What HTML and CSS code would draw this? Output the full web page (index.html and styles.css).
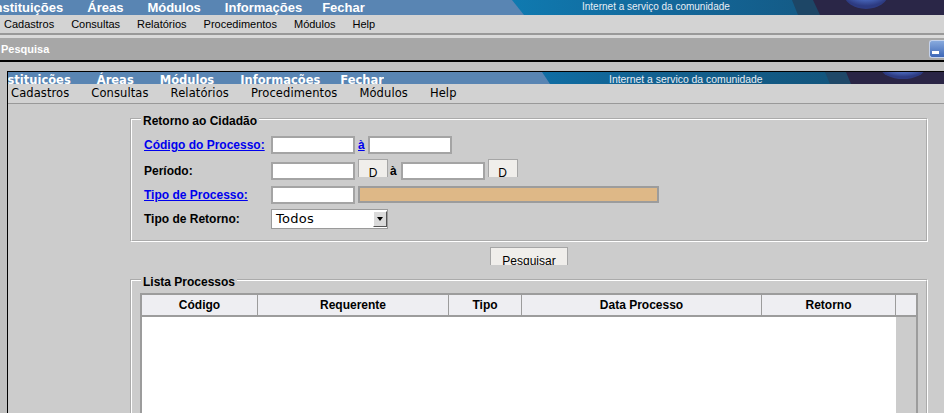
FILE: index.html
```html
<!DOCTYPE html>
<html lang="pt">
<head>
<meta charset="utf-8">
<title>Pesquisa</title>
<link rel="stylesheet" href="styles.css">
</head>
<body>
<header class="topbar">
  <nav class="topnav">
    <span class="first">Instituições</span><span>Áreas</span><span>Módulos</span><span>Informações</span><span class="last">Fechar</span>
  </nav>
  <svg class="banner" width="434" height="15" viewBox="0 0 434 15">
    <defs>
      <linearGradient id="bt" x1="0" x2="1" y1="0" y2="0">
        <stop offset="0" stop-color="#0f7ab0"/>
        <stop offset="0.35" stop-color="#13689b"/>
        <stop offset="0.7" stop-color="#145a85"/>
        <stop offset="1" stop-color="#14557d"/>
      </linearGradient>
      <radialGradient id="blob" cx="0.5" cy="0.3" r="0.6">
        <stop offset="0" stop-color="#b4c8f2"/>
        <stop offset="0.55" stop-color="#4d6fc6"/>
        <stop offset="1" stop-color="#2d3b82"/>
      </radialGradient>
    </defs>
    <rect width="434" height="15" fill="url(#bt)"/>
    <polygon points="0,0 2,0 14,15 0,15" fill="#5985b3"/>
    <polygon points="282,0 434,0 434,15 288,15" fill="#1d4666"/>
    <polygon points="303,0 434,0 434,15 310,15" fill="#2a2647"/>
    <ellipse cx="356" cy="-6" rx="22" ry="15" fill="url(#blob)"/>
    <text x="72" y="9.5" font-family="Liberation Sans, Arial, sans-serif" font-size="10" fill="#e8eef5">Internet a serviço da comunidade</text>
  </svg>
</header>
<div class="menubar">
  <span>Cadastros</span><span>Consultas</span><span>Relatórios</span><span>Procedimentos</span><span>Módulos</span><span>Help</span>
</div>
<div class="titlebar">
  <span class="title">Pesquisa</span>
  <span class="minbtn"><span class="dash"></span></span>
</div>
<div class="frame-area">
  <div class="frame">
    <div class="ibar">
      <nav class="inav">
        <span>Instituições</span><span>Áreas</span><span>Módulos</span><span>Informações</span><span class="last">Fechar</span>
      </nav>
      <svg class="ibanner" width="414" height="12" viewBox="0 0 414 12">
        <defs>
          <linearGradient id="ibt" x1="0" x2="1" y1="0" y2="0">
            <stop offset="0" stop-color="#0f6fa6"/>
            <stop offset="0.3" stop-color="#12608f"/>
            <stop offset="1" stop-color="#134f72"/>
          </linearGradient>
          <radialGradient id="iblob" cx="0.5" cy="0.3" r="0.6">
            <stop offset="0" stop-color="#b4c8f2"/>
            <stop offset="0.55" stop-color="#5273c8"/>
            <stop offset="1" stop-color="#2d3b82"/>
          </radialGradient>
        </defs>
        <rect width="414" height="12" fill="url(#ibt)"/>
        <polygon points="0,0 12,0 20,12 0,12" fill="#5985b3"/>
        <polygon points="295,0 414,0 414,12 300,12" fill="#1f4868"/>
        <polygon points="316,0 414,0 414,12 321,12" fill="#2a2545"/>
        <ellipse cx="373" cy="-4" rx="22" ry="11" fill="url(#iblob)"/>
        <text x="79" y="11" font-family="Liberation Sans, Arial, sans-serif" font-size="10.4" fill="#e8eef5">Internet a servico da comunidade</text>
      </svg>
    </div>
    <div class="imenu">
      <span>Cadastros</span><span>Consultas</span><span>Relatórios</span><span>Procedimentos</span><span>Módulos</span><span>Help</span>
    </div>
    <main class="content">
      <fieldset class="box box-form">
        <legend class="legend legend-form">Retorno ao Cidadão</legend>
        <div class="rows">
          <div class="row">
            <a class="label link" href="#">Código do Processo:</a>
            <input class="field" type="text">
            <a class="to to-first link" href="#">à</a>
            <input class="field" type="text">
          </div>
          <div class="row row-tall">
            <span class="label">Período:</span>
            <input class="field" type="text">
            <button class="btn btn-date" type="button">D</button>
            <span class="to to-date">à</span>
            <input class="field" type="text">
            <button class="btn btn-date" type="button">D</button>
          </div>
          <div class="row">
            <a class="label link" href="#">Tipo de Processo:</a>
            <input class="field" type="text">
            <span class="lookup"></span>
          </div>
          <div class="row row-select">
            <span class="label">Tipo de Retorno:</span>
            <div class="select">
              <span class="select-value">Todos</span>
              <span class="select-arrow"></span>
            </div>
          </div>
        </div>
      </fieldset>
      <div class="actions">
        <button class="btn btn-search" type="button">Pesquisar</button>
      </div>
      <fieldset class="box box-list">
        <legend class="legend legend-list">Lista Processos</legend>
        <div class="grid">
          <div class="ghead">
            <div class="gcell">Código</div>
            <div class="gcell">Requerente</div>
            <div class="gcell">Tipo</div>
            <div class="gcell">Data Processo</div>
            <div class="gcell">Retorno</div>
            <div class="gcell"></div>
          </div>
          <div class="gbody">
            <div class="gwhite"></div>
            <div class="gtrack"></div>
          </div>
        </div>
      </fieldset>
    </main>
  </div>
</div>
</body>
</html>
```

FILE: styles.css
```css
html, body {
  margin: 0;
  padding: 0;
  overflow: hidden;
}

body {
  width: 944px;
  height: 413px;
  background: #c0c0c0;
  font-family: "Liberation Sans", Arial, sans-serif;
  color: #000;
}

/* ---------- outer page ---------- */
.topbar {
  display: flex;
  height: 15px;
  background: #5985b3;
  overflow: hidden;
}

.topnav {
  display: flex;
  gap: 24px;
  font-weight: bold;
  font-size: 13px;
  line-height: 15px;
  color: #fff;
  white-space: nowrap;
}

.topnav .first {
  margin-left: -9px;
}

.topnav .last {
  margin-left: -4px;
}

.banner {
  display: block;
  flex: none;
  margin-left: auto;
}

.menubar {
  display: flex;
  gap: 17px;
  height: 18px;
  padding-left: 4px;
  background: #d3d3d3;
  border-bottom: 2px solid #999;
  font-size: 11px;
  line-height: 18px;
  white-space: nowrap;
}

.titlebar {
  display: flex;
  align-items: center;
  justify-content: space-between;
  height: 22px;
  padding-left: 1px;
  background: #a7a7a7;
  border-top: 3px solid #dadada;
  border-bottom: 2px solid #000;
}

.title {
  font-size: 11px;
  font-weight: bold;
  color: #fff;
}

.minbtn {
  display: flex;
  align-items: flex-end;
  box-sizing: border-box;
  width: 15px;
  height: 18px;
  padding: 0 0 3px 2px;
  border: 1px solid #c4d2ec;
  border-right: 0;
  border-radius: 3px 0 0 3px;
  background: linear-gradient(#88aadd, #3d66b6);
}

.dash {
  width: 7px;
  height: 3px;
  background: #fff;
}

/* ---------- inner frame ---------- */
.frame-area {
  padding: 9px 0 0 7px;
}

.frame {
  height: 341px;
  border-top: 1px solid #000;
  border-left: 1px solid #000;
  background: #cccccc;
  overflow: hidden;
}

.ibar {
  display: flex;
  align-items: flex-start;
  height: 12px;
  background: #5985b3;
  overflow: hidden;
}

.inav {
  display: flex;
  gap: 26px;
  box-sizing: border-box;
  height: 12px;
  margin-left: -13px;
  padding-top: 5px;
  font-family: "DejaVu Sans", sans-serif;
  font-weight: bold;
  font-size: 11.5px;
  line-height: 7px;
  color: #fff;
  white-space: nowrap;
  overflow: hidden;
}

.inav .last {
  margin-left: -6px;
}

.ibanner {
  display: block;
  flex: none;
  margin-left: auto;
}

.imenu {
  display: flex;
  gap: 22px;
  height: 19px;
  padding-left: 3px;
  background: #d2d2d2;
  border-bottom: 1px solid #999;
  font-family: "DejaVu Sans", sans-serif;
  font-size: 11.5px;
  line-height: 19px;
  letter-spacing: 0.1px;
  white-space: nowrap;
}

.content {
  padding: 5px 16px 0 122px;
}

/* ---------- fieldsets ---------- */
.box {
  margin: 0;
  min-width: 0;
  border: 2px groove #fff;
}

.box-form {
  padding: 8px 12px 11px;
}

.box-list {
  margin-top: 5px;
  padding: 4px 8px 0;
}

.legend {
  padding: 5px 2px 0;
  font-weight: bold;
  font-size: 12px;
  line-height: 14px;
}

.legend-form {
  margin-left: -3px;
}

.legend-list {
  margin-left: 1px;
}

.rows {
  display: flex;
  flex-direction: column;
  gap: 5px;
}

.row {
  display: flex;
  align-items: flex-end;
  height: 18px;
}

.row-tall {
  height: 21px;
  margin-bottom: 1px;
}

.row-select {
  height: 20px;
  align-items: center;
}

.label {
  flex: none;
  width: 127px;
  font-weight: bold;
  font-size: 12px;
  line-height: 18px;
  color: #000;
}

.link {
  color: #0000ee;
  text-decoration: underline;
}

.field {
  flex: none;
  box-sizing: border-box;
  width: 84px;
  height: 18px;
  margin: 0;
  padding: 0;
  border: 2px solid #a4a4a4;
  background: #fff;
}

.to {
  font-weight: bold;
  font-size: 12px;
  line-height: 18px;
}

.to-first {
  margin: 0 3px 0 3px;
}

.to-date {
  margin: 0 4px 0 2px;
  color: #000;
}

.btn {
  display: flex;
  justify-content: center;
  align-items: flex-start;
  box-sizing: border-box;
  height: 18px;
  margin: 0;
  padding: 6px 0 0;
  border: 1px solid #a6a6a6;
  border-bottom: 0;
  background: #f0eeeb;
  font-family: "Liberation Sans", Arial, sans-serif;
  font-size: 12px;
  line-height: 14px;
  color: #000;
  overflow: hidden;
}

.btn-date {
  flex: none;
  align-self: flex-start;
  width: 30px;
  margin-left: 3px;
}

.lookup {
  flex: none;
  align-self: flex-start;
  box-sizing: border-box;
  width: 301px;
  height: 17px;
  margin-left: 3px;
  border: 2px solid #9c9c9c;
  background: #deb887;
}

.select {
  display: flex;
  align-items: center;
  box-sizing: border-box;
  width: 117px;
  height: 20px;
  border: 1px solid #9a9a9a;
  background: #fff;
}

.select-value {
  flex: 1;
  padding-left: 4px;
  font-family: "DejaVu Sans", sans-serif;
  font-size: 13px;
  line-height: 18px;
  letter-spacing: 0.3px;
}

.select-arrow {
  display: flex;
  align-items: center;
  justify-content: center;
  box-sizing: border-box;
  width: 14px;
  height: 16px;
  background: #dadada;
  border-top: 1px solid #fff;
  border-left: 1px solid #fff;
  border-right: 1px solid #555;
  border-bottom: 1px solid #555;
}

.select-arrow::before {
  content: "";
  border-left: 3px solid transparent;
  border-right: 3px solid transparent;
  border-top: 4px solid #000;
}

.actions {
  display: flex;
  justify-content: center;
  margin-top: 5px;
}

.btn-search {
  width: 78px;
}

/* ---------- grid ---------- */
.grid {
  border: 2px solid #9c9c9c;
  border-bottom: 0;
}

.ghead {
  display: grid;
  grid-template-columns: 116px 191px 73px 240px 134px 20px;
  height: 20px;
  background: #eeeef2;
  border-bottom: 2px solid #9c9c9c;
}

.gcell {
  border-right: 1px solid #9c9c9c;
  font-weight: bold;
  font-size: 12px;
  line-height: 20px;
  text-align: center;
}

.gcell:last-child {
  border-right: 0;
}

.gbody {
  display: flex;
  height: 140px;
}

.gwhite {
  width: 754px;
  background: #fff;
}

.gtrack {
  flex: 1;
  background: #cccccc;
}
```
